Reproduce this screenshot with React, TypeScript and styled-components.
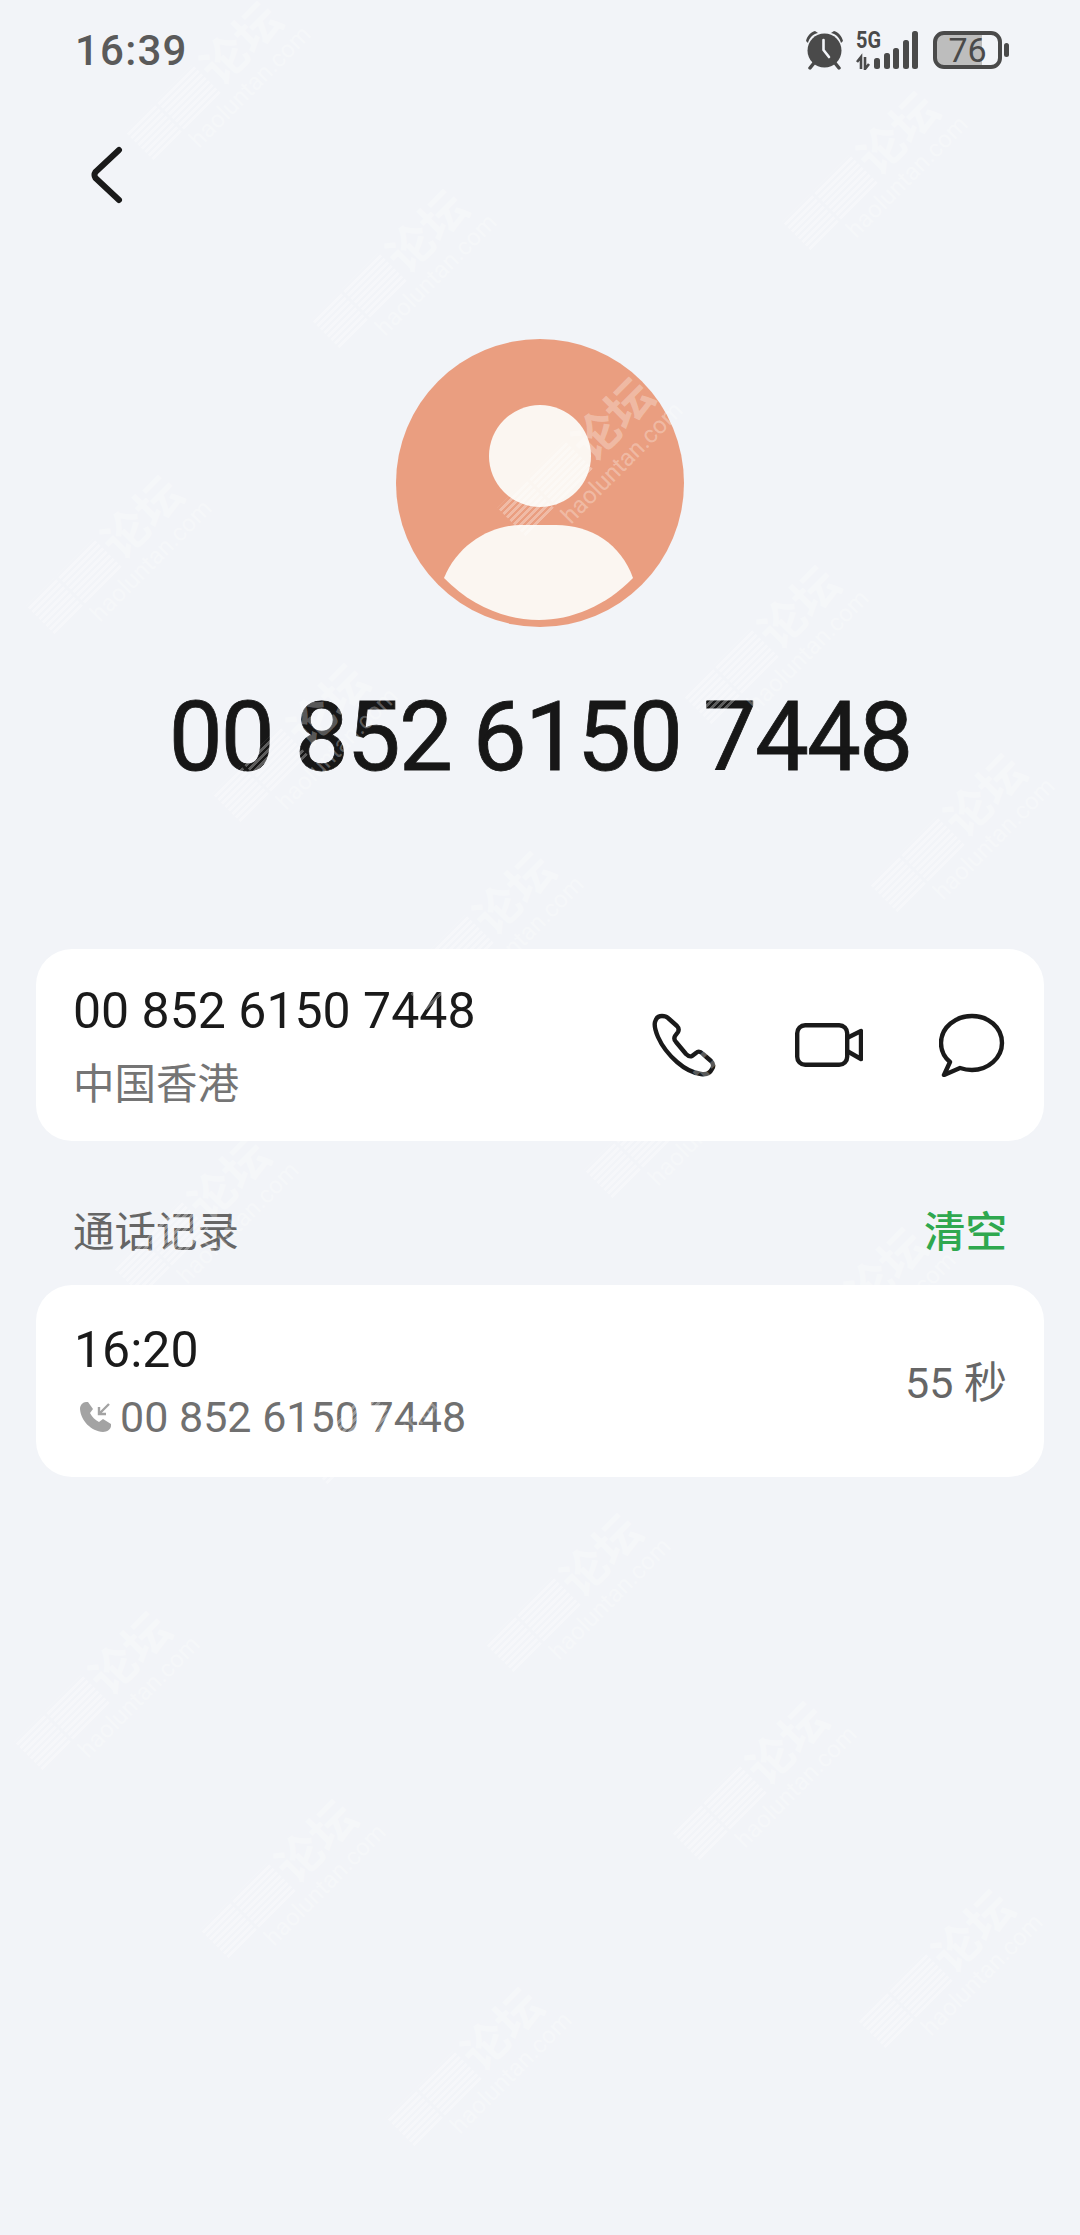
import styled, { createGlobalStyle } from "styled-components";

const GlobalStyle = createGlobalStyle`
  html, body {
    margin: 0;
    padding: 0;
    background: #f2f4f8;
  }
`;

const FONT = `Roboto, "Noto Sans CJK SC", sans-serif`;

const Page = styled.div`
  position: relative;
  width: 1080px;
  height: 2235px;
  overflow: hidden;
  background: #f2f4f8;
  font-family: ${FONT};
  color: #1a1a1a;
`;

const StatusBar = styled.div`
  height: 100px;
  padding: 0 71px 0 75px;
  display: flex;
  align-items: center;
  justify-content: space-between;
`;

const Clock = styled.span`
  font-size: 42px;
  font-weight: 500;
  letter-spacing: 1.2px;
  color: #5a5a5a;
`;

const StatusIcons = styled.div`
  display: flex;
  align-items: center;
  gap: 11px;
`;

const BatteryBody = styled.div`
  position: relative;
  box-sizing: border-box;
  width: 69px;
  height: 38px;
  border: 4px solid #4a4a4a;
  border-radius: 11px;
  background: linear-gradient(90deg, #bdbdbd 0, #bdbdbd 74%, transparent 74%);
  display: flex;
  align-items: center;
  justify-content: center;
  font-size: 34px;
  line-height: 30px;
  color: #4a4a4a;
`;

const BatteryNub = styled.div`
  width: 5px;
  height: 14px;
  margin-left: 2px;
  border-radius: 3px;
  background: #4a4a4a;
`;

const Battery = styled.div`
  display: flex;
  align-items: center;
  margin-left: 3px;
`;

const NavBar = styled.div`
  height: 100px;
  margin-top: 25px;
  padding-left: 90px;
  display: flex;
  align-items: center;
`;

const Profile = styled.div`
  margin-top: 114px;
  display: flex;
  flex-direction: column;
  align-items: center;
`;

const Title = styled.h1`
  margin: 50px 0 0;
  font-size: 96px;
  line-height: 120px;
  font-weight: 400;
  letter-spacing: -1.9px;
  color: #171717;
  -webkit-text-stroke: 0.8px #171717;
`;

const Card = styled.div`
  box-sizing: border-box;
  width: 1008px;
  height: 192px;
  margin: 0 36px;
  padding: 0 37px;
  border-radius: 36px;
  background: #fff;
  display: flex;
  align-items: center;
  justify-content: space-between;
`;

const ContactCard = styled(Card)`
  margin-top: 152px;
`;

const TextStack = styled.div`
  display: flex;
  flex-direction: column;
`;

const PrimaryNumber = styled.div`
  margin-top: 2px;
  font-size: 50px;
  line-height: 60px;
  color: #1a1a1a;
`;

const Region = styled.div`
  margin-top: 17px;
  font-size: 41.5px;
  line-height: 54px;
  color: #757575;
`;

const Actions = styled.div`
  display: flex;
  align-items: center;
  gap: 76px;
  margin-right: 2px;
`;

const PhoneSlot = styled.div`
  display: flex;
  margin-right: 3px;
`;

const SectionHeader = styled.div`
  height: 144px;
  padding: 32px 37px 0;
  box-sizing: border-box;
  margin: 0 36px;
  display: flex;
  align-items: center;
  justify-content: space-between;
`;

const SectionTitle = styled.span`
  font-size: 41.5px;
  color: #666;
`;

const ClearLink = styled.span`
  font-size: 41.5px;
  font-weight: 500;
  color: #2fa84f;
`;

const CallTime = styled.div`
  margin-top: 2px;
  margin-left: 1px;
  font-size: 50px;
  line-height: 60px;
  color: #1a1a1a;
`;

const CallLine = styled.div`
  margin-top: 10px;
  display: flex;
  align-items: center;
  gap: 8px;
  padding-left: 6px;
  font-size: 43px;
  line-height: 54px;
  color: #707070;
`;

const Duration = styled.span`
  margin-top: -5px;
  font-size: 43px;
  color: #666;
`;

const WatermarkLayer = styled.div`
  position: absolute;
  inset: 0;
  pointer-events: none;
`;

const Mark = styled.div`
  position: absolute;
  width: 210px;
  transform: rotate(-45deg);
  display: flex;
  flex-direction: column;
  color: rgba(255, 255, 255, 0.3);
`;

const MarkRow = styled.div`
  display: flex;
  align-items: center;
  gap: 3px;
`;

const MarkStripes = styled.div<{ $w: number }>`
  width: ${({ $w }) => $w}px;
  height: 40px;
  background: repeating-linear-gradient(
    0deg,
    rgba(255, 255, 255, 0.3) 0,
    rgba(255, 255, 255, 0.3) 3px,
    transparent 3px,
    transparent 5px
  );
`;

const MarkTitle = styled.span`
  font-size: 46px;
  line-height: 46px;
  font-weight: 700;
`;

const MarkUrl = styled.span`
  margin-left: 40px;
  font-size: 24px;
  line-height: 26px;
`;

// watermark grid, only the tiles that fit on the page
const marks: { x: number; y: number }[] = [];
for (let i = -10; i <= 5; i++) {
  for (let j = -4; j <= 6; j++) {
    const x = 578 + i * 186 + j * 471;
    const y = 1591 + i * 188 - j * 98;
    if (x > 100 && x < 980 && y > 75 && y < 2135) marks.push({ x, y });
  }
}

function AlarmIcon() {
  return (
    <svg width="40" height="40" viewBox="0 0 40 40">
      <circle cx="19.5" cy="20.5" r="17" fill="#4a4a4a" />
      <path d="M1 11 C2 6 6 2 10 1 L13 3 C8 4 4 8 3 13 Z" fill="#4a4a4a" />
      <path d="M38 11 C37 6 33 2 29 1 L26 3 C31 4 35 8 36 13 Z" fill="#4a4a4a" />
      <path d="M5 38 L9 33 M34 38 L30 33" stroke="#4a4a4a" strokeWidth="3.5" strokeLinecap="round" />
      <path d="M18.5 10 V20 L24 27" fill="none" stroke="#f2f4f8" strokeWidth="2.6" strokeLinecap="round" strokeLinejoin="round" />
    </svg>
  );
}

function SignalIcon() {
  return (
    <svg width="63" height="40" viewBox="0 0 63 40">
      <text x="0" y="18" fontFamily="Roboto, sans-serif" fontSize="24" fontWeight="700" fill="#4a4a4a" textLength="25" lengthAdjust="spacingAndGlyphs">
        5G
      </text>
      <path d="M5 39 V27 L1 32 M9 27 V39 L13 34" fill="none" stroke="#4a4a4a" strokeWidth="2.6" />
      <rect x="18" y="28" width="6" height="11" rx="2.5" fill="#4a4a4a" />
      <rect x="28" y="23" width="6" height="16" rx="2.5" fill="#4a4a4a" />
      <rect x="37" y="18" width="6" height="21" rx="2.5" fill="#4a4a4a" />
      <rect x="47" y="10" width="6" height="29" rx="2.5" fill="#4a4a4a" />
      <rect x="56" y="1" width="6" height="38" rx="2.5" fill="#4a4a4a" />
    </svg>
  );
}

function BackIcon() {
  return (
    <svg width="34" height="58" viewBox="0 0 34 58">
      <path d="M29 4 L5.5 26 Q3.5 29 5.5 32 L29 54" fill="none" stroke="#1a1a1a" strokeWidth="6" strokeLinecap="round" strokeLinejoin="round" />
    </svg>
  );
}

function AvatarIcon() {
  return (
    <svg width="288" height="288" viewBox="0 0 288 288">
      <circle cx="144" cy="144" r="144" fill="#ea9e80" />
      <circle cx="144" cy="117" r="51" fill="#fbf6f1" />
      <path d="M48 239 C62 205 95 186 125 186 H160 C195 186 225 205 237 239 C210 267 175 281 143 281 C110 281 75 267 48 239 Z" fill="#fbf6f1" />
    </svg>
  );
}

function PhoneIcon() {
  return (
    <svg width="64" height="64" viewBox="0 0 64 64">
      <path d="M10 3 C7 3 4 5 3 9 C2 13 3 17 6 24 C10 33 17 42 25 49 C33 56 41 60 49 61 C54 62 58 60 60 56 C62 53 61 50 59 48 L51 41 C48 38 46 38 44 40 L40 43 C38 44 36 43 34 41 L24 29 C22 27 22 25 23 23 L26 19 C27 17 27 15 25 13 L16 5 C14 3 12 3 10 3 Z" fill="none" stroke="#1a1a1a" strokeWidth="4.4" strokeLinejoin="round" />
    </svg>
  );
}

function VideoIcon() {
  return (
    <svg width="68" height="44" viewBox="0 0 68 44">
      <rect x="2.2" y="2.2" width="50" height="39.6" rx="8" fill="none" stroke="#1a1a1a" strokeWidth="4.4" />
      <path d="M52 15 L66 8 V36 L52 28" fill="none" stroke="#1a1a1a" strokeWidth="4.4" strokeLinejoin="round" />
    </svg>
  );
}

function ChatIcon() {
  return (
    <svg width="66" height="64" viewBox="0 0 66 64">
      <path d="M21 55 C24 56 28 57 33 57 C49 57 63 45 63 30 C63 14 49 3 33 3 C17 3 2 14 2 30 C2 38 5 44 11 49 L5 62 Z" fill="none" stroke="#1a1a1a" strokeWidth="4.4" strokeLinejoin="round" />
    </svg>
  );
}

function IncomingIcon() {
  return (
    <svg width="33" height="33" viewBox="0 0 33 33">
      <path d="M7 1 C4 1 1 4 1 8 C2 20 12 30 24 31 C28 31 32 28 32 25 V23 L24 18 L20 21 C16 19 13 16 11 12 L14 8 L9 1 Z" fill="#a3a3a3" />
      <path d="M30 3 L20 13 M20 6 V13 H27" fill="none" stroke="#a3a3a3" strokeWidth="2.4" />
    </svg>
  );
}

export default function App() {
  return (
    <Page>
      <GlobalStyle />
      <StatusBar>
        <Clock>16:39</Clock>
        <StatusIcons>
          <AlarmIcon />
          <SignalIcon />
          <Battery>
            <BatteryBody>76</BatteryBody>
            <BatteryNub />
          </Battery>
        </StatusIcons>
      </StatusBar>
      <NavBar>
        <BackIcon />
      </NavBar>
      <Profile>
        <AvatarIcon />
        <Title>00 852 6150 7448</Title>
      </Profile>
      <ContactCard>
        <TextStack>
          <PrimaryNumber>00 852 6150 7448</PrimaryNumber>
          <Region>中国香港</Region>
        </TextStack>
        <Actions>
          <PhoneSlot>
            <PhoneIcon />
          </PhoneSlot>
          <VideoIcon />
          <ChatIcon />
        </Actions>
      </ContactCard>
      <SectionHeader>
        <SectionTitle>通话记录</SectionTitle>
        <ClearLink>清空</ClearLink>
      </SectionHeader>
      <Card>
        <TextStack>
          <CallTime>16:20</CallTime>
          <CallLine>
            <IncomingIcon />
            00 852 6150 7448
          </CallLine>
        </TextStack>
        <Duration>55 秒</Duration>
      </Card>
      <WatermarkLayer>
        {marks.map((m) => (
          <Mark key={`${m.x}-${m.y}`} style={{ left: m.x - 100, top: m.y - 34 }}>
            <MarkRow>
              <MarkStripes $w={40} />
              <MarkStripes $w={52} />
              <MarkTitle>论坛</MarkTitle>
            </MarkRow>
            <MarkUrl>haoluntan.com</MarkUrl>
          </Mark>
        ))}
      </WatermarkLayer>
    </Page>
  );
}
